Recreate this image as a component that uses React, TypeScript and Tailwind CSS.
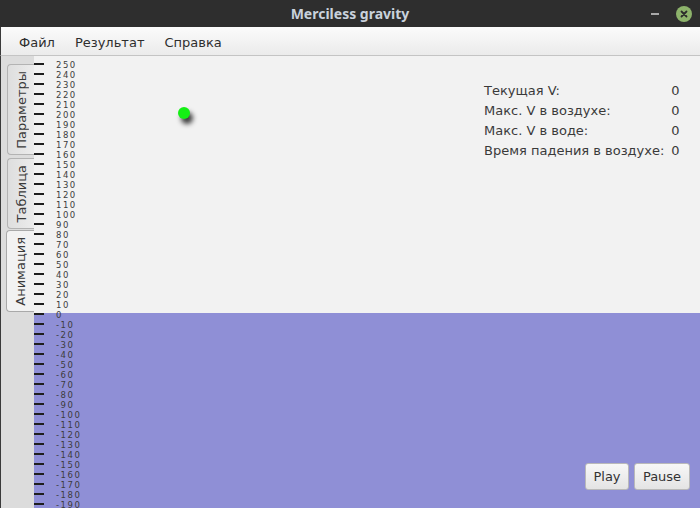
import React from "react";

const scaleValues: number[] = [];
for (let v = 250; v >= -190; v -= 10) scaleValues.push(v);

const stats = [
    { label: "Текущая V:", value: "0" },
    { label: "Макс. V в воздухе:", value: "0" },
    { label: "Макс. V в воде:", value: "0" },
    { label: "Время падения в воздухе:", value: "0" },
];

const VerticalTab: React.FC<{ label: string; selected?: boolean; className?: string }> = ({ label, selected = false, className = "" }) => (
    <div
        className={
            "flex items-center justify-center rounded-l-[4px] border border-r-0 " +
            (selected
                ? "bg-[#f2f2f2] border-[#a9a9a9] "
                : "bg-gradient-to-r from-[#dedede] to-[#ececec] border-[#b3b3b3] ") +
            className
        }
    >
        <span className="[writing-mode:vertical-rl] rotate-180 text-[13px] text-[#3a3a3a] leading-none">
            {label}
        </span>
    </div>
);

export default function App() {
    return (
        <div className="w-[700px] h-[508px] flex flex-col overflow-hidden bg-[#f2f2f2] font-['DejaVu_Sans',sans-serif]">
            {/* window title */}
            <div className="h-[27px] bg-[#2e2e2e] relative flex items-center justify-center shrink-0">
                <span className="font-['Noto_Sans',sans-serif] font-bold text-[14px] text-[#c9d2dc]">Merciless gravity</span>
                <div className="absolute right-[8px] top-0 h-full flex items-center gap-[17px]">
                    <div className="w-[8px] h-[2px] bg-[#a8a8a8]" />
                    <div className="w-[16px] h-[16px] rounded-full bg-[#8db36b] flex items-center justify-center">
                        <svg width="8" height="8" viewBox="0 0 8 8">
                            <path d="M1.5 1.5l5 5M6.5 1.5l-5 5" stroke="#2b2b2b" strokeWidth="1.8" strokeLinecap="round" />
                        </svg>
                    </div>
                </div>
            </div>

            {/* menu bar */}
            <div className="h-[29px] shrink-0 flex items-center gap-[20px] pl-[18px] pt-[3px] bg-gradient-to-b from-[#fbfbfb] to-[#ebebeb] border-b border-[#c4c4c4] border-l border-l-[#3a3a3a] text-[13px] text-[#2e2e2e]">
                <span>Файл</span>
                <span>Результат</span>
                <span>Справка</span>
            </div>

            {/* body */}
            <div className="flex-1 flex border-l border-[#3a3a3a] min-h-0">
                <div className="w-[33px] shrink-0 bg-[#dcdcdc] flex flex-col items-end pt-[8px]">
                    <VerticalTab label="Параметры" className="w-[27px] h-[91px]" />
                    <VerticalTab label="Таблица" className="w-[27px] h-[71px] mt-[3px]" />
                    <VerticalTab label="Анимация" selected className="w-[28px] h-[82px] mt-[1px]" />
                </div>

                <div className="flex-1 relative flex flex-col">
                    <div className="h-[257px] bg-[#f2f2f2] shrink-0" />
                    <div className="flex-1 bg-[#8f8fd6]" />

                    {/* height scale */}
                    <div className="absolute left-0 top-[4px] flex flex-col">
                        {scaleValues.map((v) => (
                            <div key={v} className="h-[10px] flex items-center">
                                <div className="w-[10px] h-[2px] bg-[#1e1e1e] -mt-[3px]" />
                                <span className="ml-[12px] text-[8.5px] tracking-[1.5px] leading-none text-[#3c3c3c]">{v}</span>
                            </div>
                        ))}
                    </div>

                    {/* ball */}
                    <div className="absolute left-[144px] top-[51px] w-[12px] h-[12px] rounded-full bg-[#14f014] shadow-[3px_5px_5px_rgba(0,0,0,0.75)]" />

                    {/* stats */}
                    <div className="absolute left-[450px] top-[25px] grid grid-cols-[auto_auto] gap-x-[7px] text-[13px] text-[#3a3a3a]">
                        {stats.map((s) => (
                            <React.Fragment key={s.label}>
                                <span className="h-[20px] leading-[20px]">{s.label}</span>
                                <span className="h-[20px] leading-[20px]">{s.value}</span>
                            </React.Fragment>
                        ))}
                    </div>

                    {/* controls */}
                    <div className="absolute right-[10px] bottom-[18px] flex gap-[5px] text-[13px] text-[#333]">
                        <button className="h-[27px] w-[44px] rounded-[3px] border border-[#b9b9b9] bg-gradient-to-b from-[#f7f7f7] to-[#e4e4e4]">Play</button>
                        <button className="h-[27px] w-[56px] rounded-[3px] border border-[#b9b9b9] bg-gradient-to-b from-[#f7f7f7] to-[#e4e4e4]">Pause</button>
                    </div>
                </div>
            </div>
        </div>
    );
}
